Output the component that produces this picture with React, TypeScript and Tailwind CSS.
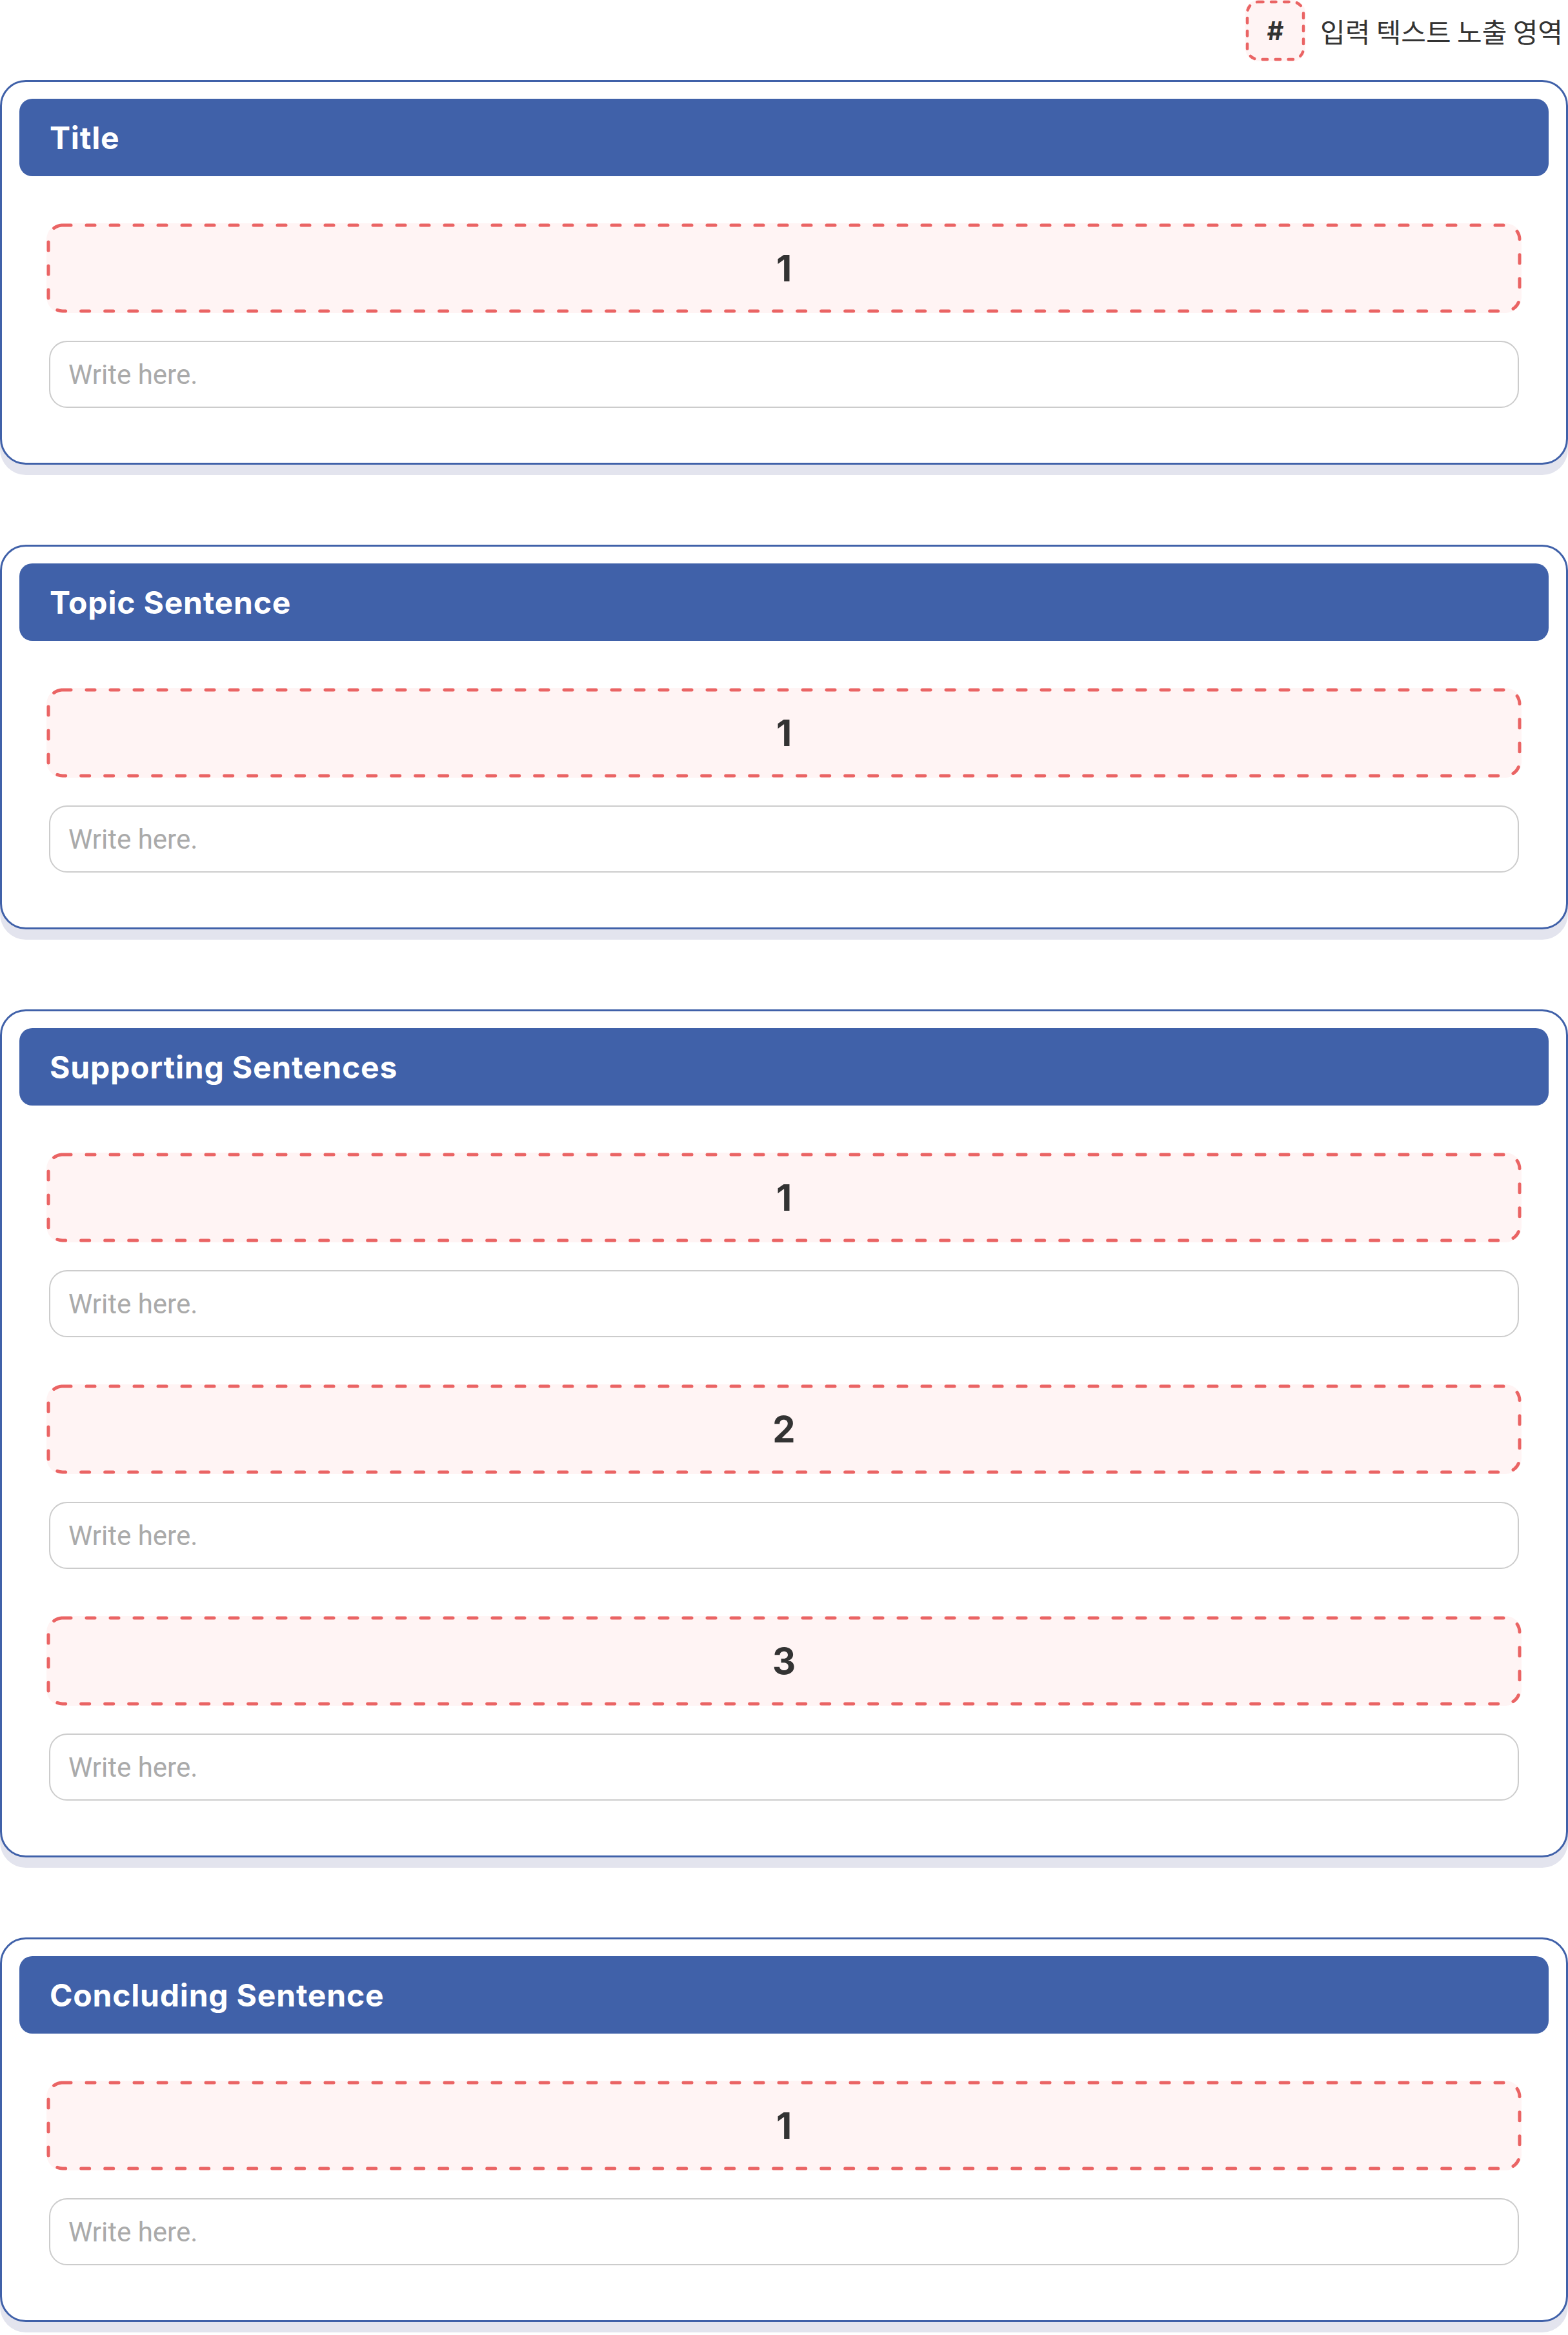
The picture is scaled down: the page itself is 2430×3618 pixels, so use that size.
import React from 'react';

type Section = {
  title: string;
  count: number;
};

const sections: Section[] = [
  { title: 'Title', count: 1 },
  { title: 'Topic Sentence', count: 1 },
  { title: 'Supporting Sentences', count: 3 },
  { title: 'Concluding Sentence', count: 1 },
];

// dashed outline drawn with svg so the dash length / round caps match the design
const DashedFrame: React.FC<{ radius: number; dash: string; width: number }> = ({ radius, dash, width }) => (
  <svg className="pointer-events-none absolute inset-[3px] h-[calc(100%-6px)] w-[calc(100%-6px)] overflow-visible">
    <rect
      width="100%"
      height="100%"
      rx={radius}
      ry={radius}
      fill="none"
      stroke="#ea6464"
      strokeWidth={width}
      strokeDasharray={dash}
      strokeLinecap="round"
    />
  </svg>
);

const NumberBox: React.FC<{ n: number }> = ({ n }) => (
  <div className="relative flex h-[139px] items-center justify-center rounded-[25px] bg-[#fff4f4]">
    <DashedFrame radius={22} dash="13 24" width={5} />
    <span className="font-['Inter',sans-serif] text-[56px] font-bold leading-none text-[#333333]">{n}</span>
  </div>
);

const WriteInput: React.FC = () => (
  <input
    type="text"
    placeholder="Write here."
    className="mx-[4px] block h-[104px] w-[calc(100%-8px)] rounded-[28px] border-2 border-[#cccccc] bg-white px-[28px] font-['Roboto',sans-serif] text-[42px] text-[#333333] outline-none placeholder:text-[#aaaaaa]"
  />
);

const Card: React.FC<{ section: Section }> = ({ section }) => (
  <div className="rounded-[40px] border-[3px] border-[#4061a9] bg-white px-[27px] pb-[85px] pt-[26px] shadow-[0_16px_0_#e3e4ee]">
    <div className="flex h-[120px] items-center rounded-[20px] bg-[#4061a9] pl-[47px]">
      <h2 className="pt-[2px] font-['Inter',sans-serif] text-[48px] font-bold leading-none tracking-[0.8px] text-white">
        {section.title}
      </h2>
    </div>
    <div className="flex flex-col px-[42px]">
      {Array.from({ length: section.count }).map((_, i) => (
        <div key={i} className="mt-[73px] flex flex-col gap-[43px]">
          <NumberBox n={i + 1} />
          <WriteInput />
        </div>
      ))}
    </div>
  </div>
);

const App: React.FC = () => {
  return (
    <div className="min-h-screen w-[2430px] bg-white">
      <div className="flex h-[95px] items-start justify-end gap-[23px] pr-[8px]">
        <div className="relative flex h-[95px] w-[93px] items-center justify-center rounded-[20px] bg-[#fff4f4]">
          <DashedFrame radius={17} dash="7.5 12.5" width={4.5} />
          <span className="font-['Inter',sans-serif] text-[40px] font-bold leading-none text-[#333333]">#</span>
        </div>
        <span className="self-center font-['Noto_Sans_CJK_KR','Noto_Sans',sans-serif] text-[42px] leading-none text-[#333333]">
          입력 텍스트 노출 영역
        </span>
      </div>
      <div className="mt-[29px] flex flex-col gap-[124px]">
        {sections.map((s) => (
          <Card key={s.title} section={s} />
        ))}
      </div>
    </div>
  );
};

export default App;
